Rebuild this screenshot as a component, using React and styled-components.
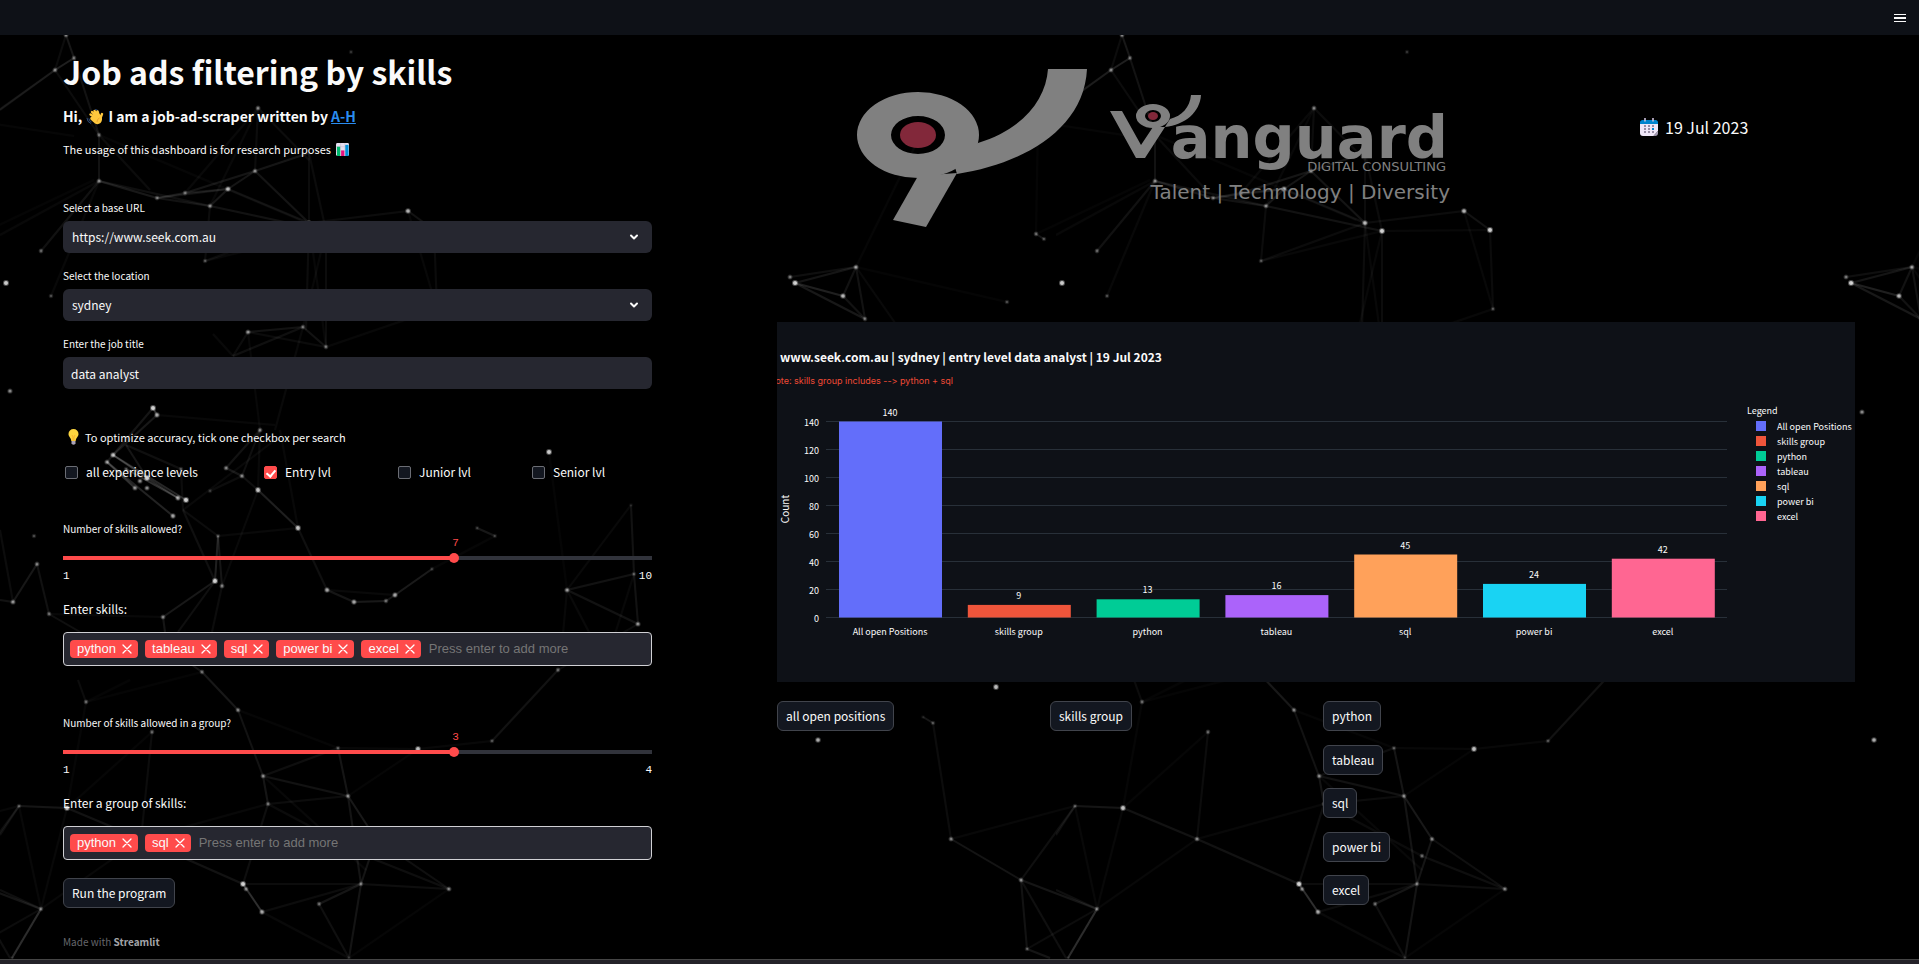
import React from "react";
import styled, { createGlobalStyle } from "styled-components";

const sans = `"Noto Sans CJK SC", "Noto Sans", sans-serif`;
const mono = `"Liberation Mono", monospace`;

const Global = createGlobalStyle`
  * { box-sizing: border-box; }
  body { margin: 0; background: #000; color: #fafafa; font-family: ${sans}; font-size: 13px; line-height: 20px; }
  h1, h2, p { margin: 0; }
  button, input, select { font-family: inherit; font-size: inherit; line-height: inherit; color: inherit; }
`;

const Page = styled.div`
  position: relative;
  display: flex;
  flex-direction: column;
  min-height: 100vh;
`;
const Backdrop = styled.svg`
  position: absolute;
  inset: 0;
  width: 100%;
  height: 100%;
  z-index: -1;
`;
const TopBar = styled.header`
  display: flex;
  align-items: center;
  justify-content: flex-end;
  height: 35px;
  padding-right: 13px;
  background: #0e1117;
`;
const MenuButton = styled.button`
  display: flex;
  padding: 0;
  border: 0;
  background: none;
`;
const Columns = styled.main`
  display: grid;
  grid-template-columns: 589fr 1078fr;
  column-gap: 125px;
  padding: 0 64px 0 63px;
`;
const FormColumn = styled.section`
  display: flex;
  flex-direction: column;
  align-items: stretch;
  padding-top: 12px;
`;
const Title = styled.h1`
  font-size: 32px;
  line-height: 48px;
  font-weight: 700;
`;
const Greeting = styled.h2`
  display: flex;
  align-items: center;
  gap: 4px;
  margin-top: 9px;
  font-size: 14px;
  line-height: 24px;
  font-weight: 700;
`;
const Link = styled.a`
  color: #2a8cf0;
  text-decoration: underline;
`;
const Intro = styled.p`
  display: flex;
  align-items: center;
  gap: 5px;
  margin-top: 11px;
  font-size: 11px;
`;
const Form = styled.form`
  display: flex;
  flex-direction: column;
  padding-top: 41px;
`;
const Field = styled.div`
  display: flex;
  flex-direction: column;
  gap: 5px;
  margin-bottom: 15px;
`;
const Label = styled.label`
  font-size: 10px;
  line-height: 16px;
`;
const SelectWrap = styled.div`
  display: grid;
  align-items: center;
  & > * { grid-area: 1 / 1; }
  svg { justify-self: end; margin-right: 12px; pointer-events: none; }
`;
const controlBase = `
  width: 100%;
  height: 32px;
  border: 0;
  border-radius: 6px;
  background: #262730;
  font-size: 12px;
`;
const Select = styled.select`
  ${controlBase}
  appearance: none;
  padding: 0 9px;
`;
const TextInput = styled.input`
  ${controlBase}
  padding: 0 8px;
`;
const Hint = styled.p`
  display: flex;
  align-items: center;
  gap: 5px;
  margin-top: 23px;
  padding-left: 4px;
  font-size: 11px;
`;
const Levels = styled.div`
  display: grid;
  grid-template-columns: 199fr 134fr 134fr 120fr;
  margin-top: 15px;
  padding-left: 2px;
`;
const Check = styled.label`
  display: flex;
  align-items: center;
  gap: 8px;
  font-size: 12px;
`;
const CheckBox = styled.input`
  appearance: none;
  display: grid;
  width: 13px;
  height: 13px;
  margin: 0;
  border: 1px solid #6b6d74;
  border-radius: 2px;
  background: #131720;
  &:checked { border-color: #ff4b4b; background: #ff4b4b; }
  &:checked::after {
    content: "";
    place-self: center;
    width: 4px;
    height: 7px;
    border: solid #fff;
    border-width: 0 2px 2px 0;
    transform: rotate(40deg);
  }
`;
const SliderField = styled.div`
  display: flex;
  flex-direction: column;
  margin-top: ${(p) => p.$top}px;
`;
const SliderValue = styled.output`
  align-self: flex-start;
  margin-left: 66.67%;
  transform: translateX(-50%);
  color: #ff4b4b;
  font: 11px/12px ${mono};
`;
const Slider = styled.input`
  appearance: none;
  width: 100%;
  height: 10px;
  margin: 4px 0;
  background: linear-gradient(to right, #ff4b4b 66.6%, #31333b 66.6%) center / 100% 4px no-repeat;
  &::-webkit-slider-thumb {
    appearance: none;
    width: 10px;
    height: 10px;
    border-radius: 50%;
    background: #ff4b4b;
  }
`;
const Range = styled.div`
  display: flex;
  justify-content: space-between;
  margin-top: 1px;
  font: 11px/16px ${mono};
`;
const TagsLabel = styled.label`
  margin-top: 15px;
  font-size: 12px;
`;
const TagBox = styled.div`
  display: flex;
  align-items: center;
  gap: 7px;
  height: 34px;
  margin-top: 13px;
  padding: 0 6px;
  border: 1px solid #d0d0d4;
  border-radius: 4px;
  background: #262730;
`;
const Tag = styled.span`
  display: flex;
  align-items: center;
  gap: 6px;
  height: 18px;
  padding: 0 6px 0 7px;
  border-radius: 4px;
  background: #ff4b4b;
  font-family: "Liberation Sans", sans-serif;
  font-size: 13px;
  line-height: 18px;
`;
const TagRemove = styled.button`
  display: flex;
  padding: 0;
  border: 0;
  background: none;
`;
const TagInput = styled.input`
  flex: 1;
  min-width: 0;
  border: 0;
  padding: 0 1px;
  background: none;
  font-family: "Liberation Sans", sans-serif;
  font-size: 13px;
  &::placeholder { color: #757575; opacity: 1; }
`;
const Button = styled.button`
  align-self: flex-start;
  height: 30px;
  padding: 0 8px;
  border: 1px solid #41444c;
  border-radius: 6px;
  background: #131720;
  font-size: 12px;
  white-space: nowrap;
`;
const RunRow = styled.div`
  display: flex;
  padding-top: 18px;
`;
const Credit = styled.footer`
  margin-top: 24px;
  color: #65666b;
  font-size: 10px;
  a { color: #a3a4a8; text-decoration: none; font-weight: 700; }
`;
const ReportColumn = styled.section`
  display: flex;
  flex-direction: column;
`;
const Banner = styled.div`
  display: grid;
  grid-template-columns: 79fr 597fr 187fr 215fr;
  height: 287px;
  padding-top: 34px;
`;
const Logo = styled.svg`
  grid-column: 2;
  width: 100%;
`;
const Today = styled.p`
  grid-column: 4;
  display: flex;
  align-items: center;
  gap: 7px;
  height: 22px;
  margin-top: 47px;
  font-size: 16px;
`;
const Chart = styled.svg`
  display: block;
  width: 100%;
  background: #0e1117;
  font-family: ${sans};
  font-size: 9px;
  fill: #fafafa;
`;
const Note = styled.text`
  fill: #ef4a35;
  font-family: Inter, sans-serif;
  font-variant-ligatures: none;
  font-feature-settings: "calt" 0;
`;
const Actions = styled.div`
  display: grid;
  grid-template-columns: repeat(4, 1fr);
  column-gap: 14px;
  margin-top: 19px;
`;
const ActionStack = styled.div`
  display: flex;
  flex-direction: column;
  justify-content: space-between;
  min-height: ${(p) => (p.$tall ? 204 : 30)}px;
`;
const BottomEdge = styled.div`
  height: 5px;
  margin-top: auto;
  border-top: 1px solid #454545;
  background: #242229;
`;

// x, y, brightness
const stars = [
  [66,35,.5],[74,58,.4],[55,70,.5],[99,135,.4],[99,181,.5],[157,198,.4],[185,193,.4],[210,206,.5],[228,189,.8],[255,171,.5],
  [258,108,.5],[408,211,.8],[41,251,.4],[6,283,1],[51,296,.3],[205,261,.3],[10,391,.6],[248,332,.6],[303,327,.4],[326,347,.4],
  [351,52,.2],[309,223,.8],[326,231,1],[434,230,1],[437,309,.3],[795,283,1],[790,277,.5],[856,267,.6],[843,296,.8],[865,319,.4],
  [1007,302,.3],[1038,122,.9],[1036,234,.4],[1044,239,.3],[918,140,.2],[153,408,1],[157,415,.7],[260,430,.5],[113,455,.8],[107,462,.6],
  [126,469,.3],[147,478,1],[140,481,.6],[135,488,.6],[147,488,.6],[178,498,.7],[186,500,1],[173,516,.7],[181,469,.3],[226,468,.5],
  [242,476,.5],[210,491,.2],[258,490,.9],[298,528,.9],[549,452,1],[218,536,.3],[34,536,.3],[37,564,.5],[13,602,.6],[49,614,.4],
  [215,581,1],[222,586,.5],[163,617,.5],[327,590,.7],[354,602,.7],[386,601,.4],[395,595,.7],[432,569,.2],[477,528,.2],[495,536,.2],
  [567,590,.6],[634,574,.3],[631,505,.1],[638,624,.6],[558,670,.4],[202,672,.4],[86,702,.4],[238,710,.5],[152,732,.4],[338,748,.3],
  [418,749,.9],[492,741,.3],[263,776,.5],[268,804,.4],[348,796,.5],[19,806,.3],[67,808,.9],[41,909,.4],[12,958,.1],[243,884,1],
  [246,889,.5],[262,912,.7],[319,904,.4],[361,884,.4],[449,889,.5],[349,958,.1],[996,687,.9],[818,740,.8],[923,717,.1],[933,723,.3],
  [951,839,.5],[1021,880,.5],[1027,949,.3],[141,839,.5],[376,839,.5],[366,856,.4],[806,412,.6],
];
// x1, y1, x2, y2, brightness
const threads = [
  [66,35,74,58,.15],[74,58,55,70,.2],[55,70,0,110,.1],[66,35,55,70,.08],[74,58,99,135,.12],[55,70,99,135,.08],[99,135,99,181,.12],[99,135,150,190,.07],
  [99,135,300,220,.04],[99,181,157,198,.16],[99,181,210,206,.1],[157,198,185,193,.16],[185,193,228,189,.12],[157,198,228,189,.12],[157,198,210,206,.12],
  [185,193,255,171,.14],[210,206,228,189,.15],[228,189,255,171,.14],[255,171,309,153,.14],[255,171,258,108,.08],[258,108,185,193,.06],[258,108,309,160,.08],
  [258,108,210,206,.05],[255,171,309,223,.13],[228,189,309,223,.1],[210,206,326,231,.12],[309,153,309,223,.08],[309,153,326,231,.07],[309,223,408,211,.08],
  [326,231,434,230,.05],[408,211,434,230,.12],[408,211,437,309,.05],[434,230,437,309,.07],[99,181,41,251,.11],[99,181,0,235,.05],[99,181,51,296,.05],
  [210,206,205,261,.08],[205,261,309,223,.07],[205,261,326,231,.05],[309,223,306,330,.08],[326,231,326,347,.08],[309,223,326,347,.05],[326,231,303,327,.05],
  [248,332,303,327,.12],[248,332,326,347,.07],[303,327,326,347,.12],[303,327,233,356,.1],[248,332,233,356,.08],[233,356,213,334,.06],[326,347,437,309,.05],
  [248,332,260,430,.05],[303,327,275,430,.06],[795,283,856,267,.14],[790,277,856,267,.1],[795,283,843,296,.2],[795,283,865,319,.16],[856,267,843,296,.12],
  [856,267,865,319,.12],[843,296,865,319,.12],[856,267,1007,302,.03],[856,267,918,140,.04],[856,267,900,330,.06],[1038,122,1111,70,.09],[1038,122,1036,234,.03],
  [1038,122,1130,136,.04],[1036,234,1150,180,.03],[1036,234,1044,239,.15],[153,408,157,415,.3],[157,415,113,455,.16],[153,408,107,462,.14],[126,445,147,478,.14],
  [126,445,181,469,.1],[113,455,147,478,.3],[107,462,135,488,.3],[113,455,186,500,.25],[107,462,173,516,.22],[126,469,178,498,.3],[147,478,178,498,.25],
  [260,430,226,468,.12],[260,430,242,476,.1],[226,468,242,476,.15],[242,476,258,490,.1],[210,491,242,476,.08],[157,415,275,425,.05],[183,510,275,440,.06],
  [183,510,218,536,.08],[183,510,215,581,.1],[183,510,181,469,.08],[258,490,298,528,.2],[258,490,260,430,.06],[258,490,222,586,.06],[218,536,298,528,.06],
  [218,536,215,581,.2],[218,536,222,586,.14],[298,528,327,590,.1],[298,528,280,430,.05],[163,617,215,581,.16],[215,581,178,632,.1],[222,586,212,632,.08],
  [163,617,165,632,.14],[327,590,354,602,.14],[327,590,395,595,.06],[354,602,386,601,.16],[386,601,395,595,.14],[395,595,432,569,.17],[432,569,495,536,.04],
  [477,528,495,536,.15],[549,452,567,590,.03],[631,505,634,574,.12],[631,505,567,590,.06],[567,590,634,574,.12],[567,590,638,624,.12],[634,574,638,624,.12],
  [567,590,590,634,.06],[567,590,563,634,.05],[634,574,615,634,.05],[37,564,13,602,.15],[37,564,49,614,.11],[13,602,0,600,.12],[0,530,13,602,.08],
  [49,614,80,632,.1],[49,614,163,617,.05],[202,672,185,660,.14],[202,672,238,710,.16],[202,672,86,702,.03],[558,670,492,741,.12],[558,670,638,624,.08],
  [78,680,86,702,.08],[86,702,67,808,.04],[86,702,130,680,.03],[238,710,263,776,.12],[238,710,338,748,.04],[338,748,418,749,.05],[418,749,492,741,.05],
  [338,748,263,776,.09],[338,748,348,796,.14],[263,776,348,796,.12],[263,776,268,804,.14],[268,804,348,796,.08],[268,804,366,856,.07],[268,804,243,884,.09],
  [348,796,376,839,.16],[348,796,361,884,.13],[376,839,361,884,.14],[376,839,449,889,.1],[366,856,449,889,.09],[263,776,366,870,.05],[152,732,141,839,.08],
  [152,732,67,808,.04],[19,806,67,808,.14],[19,806,0,835,.1],[67,808,141,839,.12],[141,839,243,884,.12],[141,839,41,909,.05],[141,839,268,804,.05],
  [19,806,41,909,.05],[67,808,41,909,.05],[41,909,12,958,.15],[41,909,0,890,.1],[243,884,262,912,.3],[243,884,361,884,.08],[361,884,449,889,.09],
  [361,884,319,904,.14],[319,904,349,958,.1],[361,884,349,958,.13],[262,912,349,958,.06],[262,912,361,884,.08],[449,889,349,958,.04],[418,749,348,796,.04],
  [923,717,933,723,.15],[933,723,951,839,.08],[951,839,1075,806,.05],[951,839,1021,880,.13],[1021,880,1075,806,.1],[1021,880,1097,909,.14],
  [1021,880,1027,949,.12],[1021,880,1066,958,.1],[1027,949,1097,909,.08],[1027,949,1050,958,.14],[1097,909,1068,958,.15],
];

function Plexus() {
  return (
    <Backdrop aria-hidden="true">
      <defs>
        <pattern id="plexus" width="1056" height="964" patternUnits="userSpaceOnUse">
          <g stroke="#fff" strokeWidth="2" fill="none">
            {threads.map(([a, b, c, d, o], i) => (
              <React.Fragment key={i}>
                <line x1={a} y1={b} x2={c} y2={d} strokeOpacity={o * 0.6} />
                {c > 1056 && <line x1={a - 1056} y1={b} x2={c - 1056} y2={d} strokeOpacity={o * 0.6} />}
              </React.Fragment>
            ))}
          </g>
          {stars.map(([x, y, o], i) => (
            <g key={i} fill="#fff">
              <circle cx={x} cy={y} r={2 + o} fillOpacity={o * 0.3} />
              <circle cx={x} cy={y} r={1 + o} fillOpacity={o * 0.7} />
            </g>
          ))}
        </pattern>
      </defs>
      <rect width="100%" height="100%" fill="url(#plexus)" />
    </Backdrop>
  );
}

const Chevron = () => (
  <svg width="12" height="12" viewBox="0 0 12 12" fill="none" stroke="#fafafa" strokeWidth="2" strokeLinecap="round" strokeLinejoin="round">
    <path d="M3 4.5 6 7.5 9 4.5" />
  </svg>
);
const Cross = () => (
  <svg width="10" height="10" viewBox="0 0 10 10" stroke="#fff" strokeWidth="1.3" strokeLinecap="round">
    <path d="M1 1 9 9M9 1 1 9" />
  </svg>
);
const WaveHand = () => (
  <svg width="18" height="17" viewBox="0 0 18 17">
    <path d="M1 10Q1 14 5 15.500M3 10.500Q3 13 5.500 14M9 1.500Q12 1.500 13 4" fill="none" stroke="#2c4a78" strokeWidth="1" />
    <g stroke="#ffc83d" strokeWidth="2.400" strokeLinecap="round">
      <path d="M10 10 4.500 6.500M11 9 6 4M12 8 8.500 3M13 8 11.500 3.500M14.500 10 16 6" />
    </g>
    <path d="M5 9 12 5 15.500 8Q17 12 14.500 15 12 17 9 15.500L4.500 11.500Q3.500 9.500 5 9Z" fill="#ffc83d" />
    <path d="M11 14Q11 11 13.500 10" fill="none" stroke="#e8992c" strokeWidth=".8" />
  </svg>
);
const BarsIcon = () => (
  <svg width="13" height="13" viewBox="0 0 14 14">
    <rect width="14" height="14" rx="1.500" fill="#e6dff0" />
    <path d="M5 0V14M9.500 0V14M0 4H14M0 9H14" stroke="#c5bcd2" strokeWidth=".6" />
    <rect x="1" y="4" width="3.500" height="10" fill="#00b86b" />
    <rect x="5.500" y="8" width="3.500" height="6" fill="#e8117f" />
    <rect x="10" y="2" width="3.500" height="12" fill="#0091d9" />
  </svg>
);
const Bulb = () => (
  <svg width="13" height="16" viewBox="0 0 13 16">
    <path d="M6.500 0A5 5 0 0 1 11.500 5C11.500 8 9 8.500 8.700 12H4.300C4 8.500 1.500 8 1.500 5A5 5 0 0 1 6.500 0Z" fill="#fcd53f" />
    <path d="M5 6 6 8V12M8 6 7 8V12" fill="none" stroke="#f7a928" strokeWidth=".7" />
    <path d="M4.500 12H8.500V14.500Q6.500 17 4.500 14.500Z" fill="#a9a2b4" />
  </svg>
);
const CalendarIcon = () => (
  <svg width="18" height="18" viewBox="0 0 18 18">
    <path d="M0 5H18V13L13.500 18H3Q0 18 0 15Z" fill="#efe6f7" />
    <path d="M18 13V15Q18 18 15 18H13.500Z" fill="#a79db5" />
    <path d="M2.500 2H15.500Q18 2 18 4.500V6H0V4.500Q0 2 2.500 2Z" fill="#0084ce" />
    <path d="M5 0V3.500M13 0V3.500" stroke="#cbbfda" strokeWidth="1.600" />
    <g fill="#998ea6">
      {[4, 8, 12].flatMap((x) => [7, 10, 13].map((y) => (
        <rect key={`${x}-${y}`} x={x} y={y} width="2" height="2" fill={x === 12 && y === 10 ? "#0084ce" : undefined} />
      )))}
    </g>
  </svg>
);

function VanguardLogo() {
  return (
    <Logo viewBox="0 0 597 160" role="img" aria-label="Vanguard Digital Consulting">
      <g fill="#808080">
        <path fillRule="evenodd" d="M62 23A61 43 0 1 1 62 109A61 43 0 1 1 62 23ZM62 47A27 19 0 1 0 62 85A27 19 0 1 0 62 47Z" />
        <path d="M192 0H231C228 61 166 95 101 105L95 85 122 74C166 61 190 31 192 0Z" />
        <path d="M62 107 101 104 70 158 37 151Z" />
        <path fillRule="evenodd" d="M297 35A17 12 0 1 1 297 59A17 12 0 1 1 297 35ZM297 41A8 6 0 1 0 297 53A8 6 0 1 0 297 41Z" />
        <path d="M335 26H345C344 43 329 56 309 58L314 50C326 47 334 38 335 26Z" />
        <path d="M254 42H266L285 76 297 58H309L289 89H280Z" />
        <g fontFamily='"DejaVu Sans", sans-serif' textAnchor="end">
          <text x="592" y="89" fontSize="59" fontWeight="700">anguard</text>
          <text x="590" y="102" fontSize="13">DIGITAL CONSULTING</text>
          <text x="594" y="130" fontSize="20">Talent | Technology | Diversity</text>
        </g>
      </g>
      <g fill="#82283a">
        <ellipse cx="62" cy="66" rx="18" ry="13" />
        <ellipse cx="297" cy="47" rx="5" ry="4" />
      </g>
    </Logo>
  );
}

const series = [
  ["All open Positions", 140, "#636efa"],
  ["skills group", 9, "#ef553b"],
  ["python", 13, "#00cc96"],
  ["tableau", 16, "#ab63fa"],
  ["sql", 45, "#ffa15a"],
  ["power bi", 24, "#19d3f3"],
  ["excel", 42, "#ff6692"],
];

function SkillsChart() {
  const yFor = (v) => 295.5 - v * 1.4;
  return (
    <Chart viewBox="0 0 1078 360" role="img" aria-label="Open positions per skill">
      <text x="3" y="40" fontSize="12" fontWeight="700">www.seek.com.au | sydney | entry level data analyst | 19 Jul 2023</text>
      <Note x="176" y="62" textAnchor="end">Note: skills group includes --&gt; python + sql</Note>
      {[0, 20, 40, 60, 80, 100, 120, 140].map((v) => (
        <g key={v}>
          <line x1="49" x2="950" y1={yFor(v)} y2={yFor(v)} stroke="#283039" />
          <text x="42" y={yFor(v) + 4} textAnchor="end">{v}</text>
        </g>
      ))}
      <text transform="translate(12 187) rotate(-90)" textAnchor="middle" fontSize="10">Count</text>
      {series.map(([name, value, color], i) => {
        const x = 62 + i * 128.8;
        return (
          <g key={name}>
            <rect x={x} y={yFor(value)} width="103" height={value * 1.4} fill={color} />
            <text x={x + 51} y={yFor(value) - 6} textAnchor="middle">{value}</text>
            <text x={x + 51} y="313" textAnchor="middle">{name}</text>
          </g>
        );
      })}
      <text x="970" y="92">Legend</text>
      {series.map(([name, , color], i) => (
        <g key={name}>
          <rect x="979" y={99 + i * 15} width="10" height="10" fill={color} />
          <text x="1000" y={108 + i * 15}>{name}</text>
        </g>
      ))}
    </Chart>
  );
}

function SliderControl({ id, label, value, min, max, top }) {
  return (
    <SliderField $top={top}>
      <Label htmlFor={id}>{label}</Label>
      <SliderValue htmlFor={id}>{value}</SliderValue>
      <Slider id={id} type="range" min={min} max={max} defaultValue={value} />
      <Range><span>{min}</span><span>{max}</span></Range>
    </SliderField>
  );
}

function TagField({ id, label, tags }) {
  return (
    <>
      <TagsLabel htmlFor={id}>{label}</TagsLabel>
      <TagBox>
        {tags.map((tag) => (
          <Tag key={tag}>
            {tag}
            <TagRemove type="button" aria-label={`Remove ${tag}`}><Cross /></TagRemove>
          </Tag>
        ))}
        <TagInput id={id} placeholder="Press enter to add more" />
      </TagBox>
    </>
  );
}

const levels = ["all experience levels", "Entry lvl", "Junior lvl", "Senior lvl"];
const actions = [["all open positions"], ["skills group"], ["python", "tableau", "sql", "power bi", "excel"]];

export default function App() {
  return (
    <Page>
      <Global />
      <Plexus />
      <TopBar>
        <MenuButton aria-label="Menu">
          <svg width="12" height="8" viewBox="0 0 12 8" fill="#fafafa">
            <path d="M0 0H12V1H0ZM0 3H12V5H0ZM0 7H12V8H0Z" />
          </svg>
        </MenuButton>
      </TopBar>
      <Columns>
        <FormColumn>
          <Title>Job ads filtering by skills</Title>
          <Greeting>
            <span>Hi,</span><WaveHand />
            <span>I am a job-ad-scraper written by <Link href="#author">A-H</Link></span>
          </Greeting>
          <Intro><span>The usage of this dashboard is for research purposes</span><BarsIcon /></Intro>
          <Form onSubmit={(e) => e.preventDefault()}>
            <Field>
              <Label htmlFor="url">Select a base URL</Label>
              <SelectWrap>
                <Select id="url"><option>https://www.seek.com.au</option></Select>
                <Chevron />
              </SelectWrap>
            </Field>
            <Field>
              <Label htmlFor="location">Select the location</Label>
              <SelectWrap>
                <Select id="location"><option>sydney</option></Select>
                <Chevron />
              </SelectWrap>
            </Field>
            <Field>
              <Label htmlFor="title">Enter the job title</Label>
              <TextInput id="title" defaultValue="data analyst" />
            </Field>
            <Hint><Bulb /><span>To optimize accuracy, tick one checkbox per search</span></Hint>
            <Levels>
              {levels.map((name) => (
                <Check key={name}>
                  <CheckBox type="checkbox" defaultChecked={name === "Entry lvl"} />
                  {name}
                </Check>
              ))}
            </Levels>
            <SliderControl id="count" label="Number of skills allowed?" value={7} min={1} max={10} top={39} />
            <TagField id="skills" label="Enter skills:" tags={["python", "tableau", "sql", "power bi", "excel"]} />
            <SliderControl id="group-count" label="Number of skills allowed in a group?" value={3} min={1} max={4} top={49} />
            <TagField id="group" label="Enter a group of skills:" tags={["python", "sql"]} />
            <RunRow><Button type="submit">Run the program</Button></RunRow>
          </Form>
          <Credit>Made with <a href="#streamlit">Streamlit</a></Credit>
        </FormColumn>
        <ReportColumn>
          <Banner>
            <VanguardLogo />
            <Today><CalendarIcon /><time dateTime="2023-07-19">19 Jul 2023</time></Today>
          </Banner>
          <SkillsChart />
          <Actions>
            {actions.map((stack) => (
              <ActionStack key={stack[0]} $tall={stack.length > 1}>
                {stack.map((name) => <Button key={name} type="button">{name}</Button>)}
              </ActionStack>
            ))}
          </Actions>
        </ReportColumn>
      </Columns>
      <BottomEdge />
    </Page>
  );
}
